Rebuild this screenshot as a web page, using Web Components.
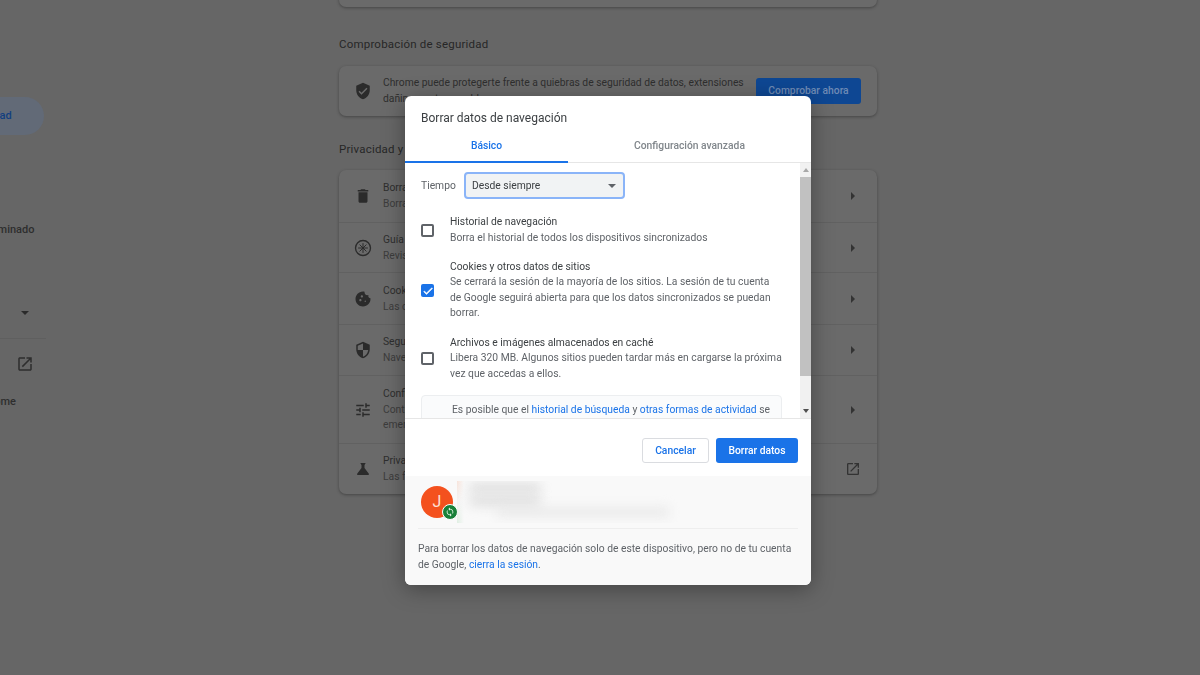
<!DOCTYPE html>
<html lang="es">
<head>
<meta charset="utf-8">
<title>Configuración</title>
<style>
  html, body { margin: 0; height: 100%; overflow: hidden; }
  body { background: #666; font-family: Roboto, "Liberation Sans", sans-serif; color: #2b2b2b; }
  settings-app { height: 675px; }
  section-title.second { margin: 25px 0 13px; }
  nav-item.last { margin-top: -1px; }
</style>
</head>
<body>
<settings-app>
  <side-nav slot="nav">
    <nav-item>Google y tú</nav-item>
    <nav-item>Autocompletar</nav-item>
    <nav-item active>Privacidad y seguridad</nav-item>
    <nav-item>Aspecto</nav-item>
    <nav-item>Buscador</nav-item>
    <nav-item>Navegador predeterminado</nav-item>
    <nav-item>Al iniciar</nav-item>
    <nav-item kind="more">Avanzada</nav-item>
    <nav-item kind="ext">Extensiones</nav-item>
    <nav-item class="last">Información de Chrome</nav-item>
  </side-nav>

  <settings-card class="stub"></settings-card>

  <section-title>Comprobación de seguridad</section-title>
  <settings-card>
    <safety-row>Chrome puede protegerte frente a quiebras de seguridad de datos, extensiones dañinas y otros problemas</safety-row>
  </settings-card>

  <section-title class="second">Privacidad y seguridad</section-title>
  <settings-card>
    <settings-row icon="trash" title="Borrar datos de navegación" h="52">Borra el historial, las cookies, la caché y mucho más</settings-row>
    <settings-row icon="guide" title="Guía de privacidad" h="50">Revisa los controles clave de privacidad y seguridad</settings-row>
    <settings-row icon="cookie" title="Cookies y otros datos de sitios" h="52">Las cookies de terceros se bloquean en modo incógnito</settings-row>
    <settings-row icon="shield" title="Seguridad" h="51">Navegación segura y otras opciones de seguridad</settings-row>
    <settings-row icon="tune" title="Configuración de sitios" h="68">Controla qué información pueden usar y mostrar los sitios (ubicación, cámara, ventanas<br>emergentes y más)</settings-row>
    <settings-row icon="flask" title="Privacy Sandbox" h="51" end="ext">Las funciones de prueba están activadas</settings-row>
  </settings-card>

  <clear-dialog slot="dialog">
    <check-row title="Historial de navegación">Borra el historial de todos los dispositivos sincronizados</check-row>
    <check-row title="Cookies y otros datos de sitios" checked>Se cerrará la sesión de la mayoría de los sitios. La sesión de tu cuenta<br>de Google seguirá abierta para que los datos sincronizados se puedan borrar.</check-row>
    <check-row title="Archivos e imágenes almacenados en caché">Libera 320 MB. Algunos sitios pueden tardar más en cargarse la próxima vez que accedas a ellos.</check-row>
  </clear-dialog>
</settings-app>

<script>
const ICONS = {
  check: '<path d="M12 1L3 5v6c0 5.55 3.84 10.74 9 12 5.16-1.26 9-6.45 9-12V5l-9-4zm-2 16l-4-4 1.41-1.41L10 14.17l6.59-6.59L18 9l-8 8z"/>',
  trash: '<path d="M6 19c0 1.1.9 2 2 2h8c1.1 0 2-.9 2-2V7H6v12zM19 4h-3.5l-1-1h-5l-1 1H5v2h14V4z"/>',
  guide: '<circle cx="12" cy="12" r="10" fill="none" stroke="currentColor" stroke-width="1.8"/><path d="M12 5.5v13M5.5 12h13M7.4 7.4l9.2 9.2M16.6 7.4l-9.2 9.2" fill="none" stroke="currentColor" stroke-width="1.3"/>',
  cookie: '<path d="M21.95 10.99c-1.79-.03-3.7-1.95-2.68-4.22-2.97 1-5.78-1.59-5.19-4.56C7.11.74 2 6.41 2 12c0 5.52 4.48 10 10 10 5.89 0 10.54-5.08 9.95-11.01zM8.5 15c-.83 0-1.5-.67-1.5-1.5S7.67 12 8.5 12s1.5.67 1.5 1.5S9.33 15 8.5 15zm2-5C9.67 10 9 9.33 9 8.5S9.67 7 10.5 7s1.5.67 1.5 1.5-.67 1.5-1.5 1.5zm4.5 6c-.55 0-1-.45-1-1s.45-1 1-1 1 .45 1 1-.45 1-1 1z"/>',
  shield: '<path d="M12 1L3 5v6c0 5.55 3.84 10.74 9 12 5.16-1.26 9-6.45 9-12V5l-9-4zm0 10.99h7c-.53 4.12-3.28 7.79-7 8.94V12H5V6.3l7-3.11v8.8z"/>',
  tune: '<path d="M3 17v2h6v-2H3zM3 5v2h10V5H3zm10 16v-2h8v-2h-8v-2h-2v6h2zM7 9v2H3v2h4v2h2V9H7zm14 4v-2H11v2h10zm-6-4h2V7h4V5h-4V3h-2v6z"/>',
  flask: '<path d="M19.8 18.4L14 10.67V6.5l1.35-1.69c.26-.33.03-.81-.39-.81H9.04c-.42 0-.65.48-.39.81L10 6.5v4.17L4.2 18.4c-.49.66-.02 1.6.8 1.6h14c.82 0 1.29-.94.8-1.6z"/>',
  ext: '<path d="M19 19H5V5h7V3H5c-1.11 0-2 .9-2 2v14c0 1.1.89 2 2 2h14c1.1 0 2-.9 2-2v-7h-2v7zM14 3v2h3.59l-9.83 9.83 1.41 1.41L19 6.41V10h2V3h-7z"/>',
  sync: '<path d="M12 4V1L8 5l4 4V6c3.31 0 6 2.69 6 6 0 1.01-.25 1.97-.7 2.8l1.46 1.46C19.54 15.03 20 13.57 20 12c0-4.42-3.58-8-8-8zm0 14c-3.31 0-6-2.69-6-6 0-1.01.25-1.97.7-2.8L5.24 7.74C4.46 8.97 4 10.43 4 12c0 4.42 3.58 8 8 8v3l4-4-4-4v3z"/>',
  tick: '<path d="M9 16.17L4.83 12l-1.41 1.41L9 19 21 7l-1.41-1.41z" stroke="currentColor" stroke-width="1"/>'
};

function svgIcon(name, size) {
  return `<svg viewBox="0 0 24 24" width="${size}" height="${size}" fill="currentColor" aria-hidden="true">${ICONS[name]}</svg>`;
}

class SettingsApp extends HTMLElement {
  constructor() {
    super();
    this.attachShadow({ mode: "open" }).innerHTML = `
      <style>
        :host { display: flex; align-items: flex-start; }
        main { width: 538px; margin: -23px 0 0 295px; display: flex; flex-direction: column; }
      </style>
      <slot name="nav"></slot>
      <main><slot></slot></main>
      <slot name="dialog"></slot>
    `;
  }
}

class SideNav extends HTMLElement {
  constructor() {
    super();
    this.attachShadow({ mode: "open" }).innerHTML = `
      <style>
        :host { display: flex; flex-direction: column; flex: none; width: 156px; margin: 21px 0 0 -112px; }
      </style>
      <slot></slot>
    `;
  }
}

class NavItem extends HTMLElement {
  constructor() {
    super();
    const kind = this.getAttribute("kind");
    const end = kind === "more"
      ? '<i class="caret"></i>'
      : kind === "ext" ? svgIcon("ext", 18) : "";
    this.attachShadow({ mode: "open" }).innerHTML = `
      <style>
        :host { display: flex; align-items: center; justify-content: space-between; box-sizing: border-box;
                height: 38px; padding: 0 10px 2px 12px; white-space: nowrap;
                font-size: 11px; font-weight: 500; color: #2e2e2e; border-radius: 0 19px 19px 0; }
        :host([active]) { background: #626a77; color: #123f80; }
        :host([kind="more"]) { margin-top: 8px; }
        :host([kind="ext"]) { margin-top: 13px; position: relative; }
        :host([kind="ext"])::before { content: ""; position: absolute; left: 0; right: -2px; top: -8px; height: 1px; background: #5f5f5f; }
        .caret { border: 4px solid transparent; border-top: 4px solid #2a2a2a; border-bottom: 0; margin-right: 5px; }
        svg { color: #2e2e2e; }
      </style>
      <span><slot></slot></span>${end}
    `;
  }
}

class SectionTitle extends HTMLElement {
  constructor() {
    super();
    this.attachShadow({ mode: "open" }).innerHTML = `
      <style>
        :host { display: block; font-size: 11.5px; font-weight: 400; line-height: 16px; color: #262626;
                letter-spacing: .2px; margin: 29px 0 14px; }
      </style>
      <slot></slot>
    `;
  }
}

class SettingsCard extends HTMLElement {
  constructor() {
    super();
    this.attachShadow({ mode: "open" }).innerHTML = `
      <style>
        :host { display: block; background: #6a6a6a; border-radius: 7px;
                box-shadow: 0 1px 3px rgba(30,30,30,.45); overflow: hidden; }
        :host(.stub) { height: 30px; }
      </style>
      <slot></slot>
    `;
  }
}

class SafetyRow extends HTMLElement {
  constructor() {
    super();
    this.attachShadow({ mode: "open" }).innerHTML = `
      <style>
        :host { display: flex; align-items: center; height: 50px; padding: 0 16px 0 15px; }
        .icon { width: 29px; flex: none; color: #2b2b2b; display: flex; }
        .text { flex: 1; font-size: 10.3px; line-height: 16px; color: #2e2e2e; }
        .btn { flex: none; margin-left: 6px; width: 105px; height: 26px; background: #0e4793; color: #6f8bb5;
               border-radius: 3px; font-size: 10.3px; font-weight: 500; line-height: 26px; text-align: center; }
      </style>
      <div class="icon">${svgIcon("check", 18)}</div>
      <div class="text"><slot></slot></div>
      <div class="btn">Comprobar ahora</div>
    `;
  }
}

class SettingsRow extends HTMLElement {
  constructor() {
    super();
    const end = this.getAttribute("end") === "ext" ? svgIcon("ext", 18) : '<i class="arrow"></i>';
    this.attachShadow({ mode: "open" }).innerHTML = `
      <style>
        :host { display: flex; align-items: center; box-sizing: border-box; height: ${this.getAttribute("h")}px;
                padding: 0 16px 0 15px; border-top: 1px solid #616161; }
        :host(:first-child) { border-top: 0; }
        .icon { width: 29px; flex: none; display: flex; color: #2b2b2b; }
        .text { flex: 1; font-size: 10.3px; line-height: 15.6px; }
        .title { color: #2e2e2e; }
        .sub { color: #3c3c3c; }
        .end { width: 16px; flex: none; display: flex; justify-content: center; color: #333; }
        .arrow { border: 4px solid transparent; border-left: 4px solid #333; border-right: 0; }
      </style>
      <div class="icon">${svgIcon(this.getAttribute("icon"), 18)}</div>
      <div class="text">
        <div class="title">${this.getAttribute("title")}</div>
        <div class="sub"><slot></slot></div>
      </div>
      <div class="end">${end}</div>
    `;
  }
}

class CheckRow extends HTMLElement {
  constructor() {
    super();
    const on = this.hasAttribute("checked");
    this.attachShadow({ mode: "open" }).innerHTML = `
      <style>
        :host { display: flex; align-items: center; margin-bottom: 13.5px; }
        .box { flex: none; box-sizing: border-box; width: 13px; height: 13px; border-radius: 2px; margin: 2px 16px 0 0;
               border: 2px solid #5f6368; display: flex; align-items: center; justify-content: center; color: #fff; }
        .box.on { background: #1a73e8; border: 0; }
        .text { font-size: 10.3px; line-height: 15.6px; color: #5f6368; flex: 1; }
        .title { color: #3c4043; }
      </style>
      <div class="box ${on ? "on" : ""}">${on ? svgIcon("tick", 12) : ""}</div>
      <div class="text">
        <div class="title">${this.getAttribute("title")}</div>
        <div><slot></slot></div>
      </div>
    `;
  }
}

class ClearDialog extends HTMLElement {
  constructor() {
    super();
    this.attachShadow({ mode: "open" }).innerHTML = `
      <style>
        :host { position: fixed; left: 405px; top: 96px; width: 406px; height: 489px; background: #fff;
                border-radius: 6px; overflow: hidden; display: flex; flex-direction: column;
                box-shadow: 0 4px 22px rgba(0,0,0,.35); color: #5f6368; font-size: 10.3px; }
        h1 { margin: 0; font-size: 12px; font-weight: 400; line-height: 16px; color: #3c4043; padding: 14px 16px 0; }
        .tabs { display: flex; height: 33px; margin-top: 4px; box-sizing: border-box; border-bottom: 1px solid #e6e6e6; }
        .tab { font-weight: 500; text-align: center; line-height: 32px; box-sizing: border-box; height: 33px; }
        .tab.on { width: 163px; color: #1a73e8; border-bottom: 2px solid #1a73e8; }
        .tab.off { flex: 1; color: #80868b; }
        .middle { display: flex; height: 255px; border-bottom: 1px solid #e6e6e6; }
        .scroll { flex: 1; overflow: hidden; padding: 9px 16px 0 16px; }
        .time { display: flex; align-items: center; margin-bottom: 15px; }
        .time label { width: 43px; flex: none; color: #5f6368; }
        .select { width: 161px; height: 27px; box-sizing: border-box; border: 2px solid #8ab4f8; border-radius: 4px;
                  background: #f1f3f4; color: #3c4043; display: flex; align-items: center; justify-content: space-between; padding: 0 6px; }
        .select i { border: 4px solid transparent; border-top: 4px solid #5f6368; border-bottom: 0; margin-right: 1px; }
        .info { margin: .5px 2px 0 0; border: 1px solid #eceef0; border-radius: 4px 4px 0 0; background: #fafbfc; height: 60px;
                padding: 6px 0 0 30px; line-height: 16px; white-space: nowrap; }
        a { color: #1a73e8; text-decoration: none; }
        .bar { width: 11px; flex: none; background: #f1f1f1; display: flex; flex-direction: column; align-items: center; }
        .bar .up { border: 3.5px solid transparent; border-bottom: 4px solid #a8a8a8; border-top: 0; margin: 5px 0 5px; }
        .bar .thumb { width: 100%; height: 199px; background: #c1c1c1; }
        .bar .down { border: 3.5px solid transparent; border-top: 4px solid #505050; border-bottom: 0; margin-top: auto; margin-bottom: 5px; }
        .actions { display: flex; justify-content: flex-end; gap: 7px; padding: 19px 13px 13px; }
        .btn { height: 25px; box-sizing: border-box; border-radius: 3px; font-weight: 500; display: flex; align-items: center; justify-content: center; }
        .btn.cancel { width: 67px; border: 1px solid #dadce0; color: #1a73e8; }
        .btn.ok { width: 82px; background: #1a73e8; color: #fff; }
        footer { flex: 1; background: #f9f9f9; padding: 0 13px; }
        .account { display: flex; align-items: center; height: 52px; padding-left: 3px; border-bottom: 1px solid #eee; }
        .avatar { position: relative; width: 32px; height: 32px; border-radius: 50%; background: #f4511e; color: #fde0d6;
                  font-size: 16px; font-weight: 400; text-align: center; line-height: 32px; flex: none; }
        .badge { position: absolute; left: 21px; top: 18px; width: 14px; height: 14px; border-radius: 50%; background: #188038;
                 border: 1px solid #fff; display: flex; align-items: center; justify-content: center; color: #e8f5e9; }
        .blur { margin-left: 4px; width: 223px; height: 42px; position: relative; overflow: hidden;
                background: linear-gradient(90deg, transparent 0, #f9f9f9 7px), linear-gradient(180deg, #f8e3da, #f3f3f3 50%, #dfefe2); }
        .blur b { position: absolute; display: block; background: #d8d8d8; filter: blur(6px); }
        .note { margin: 12px 0 0; line-height: 16px; }
      </style>
      <h1>Borrar datos de navegación</h1>
      <div class="tabs">
        <div class="tab on">Básico</div>
        <div class="tab off">Configuración avanzada</div>
      </div>
      <div class="middle">
        <div class="scroll">
          <div class="time"><label>Tiempo</label><div class="select">Desde siempre<i></i></div></div>
          <slot></slot>
          <div class="info">Es posible que el <a>historial de búsqueda</a> y <a>otras formas de actividad</a> se</div>
        </div>
        <div class="bar"><i class="up"></i><div class="thumb"></div><i class="down"></i></div>
      </div>
      <div class="actions">
        <div class="btn cancel">Cancelar</div>
        <div class="btn ok">Borrar datos</div>
      </div>
      <footer>
        <div class="account">
          <div class="avatar">J<span class="badge">${svgIcon("sync", 10)}</span></div>
          <div class="blur">
            <b style="left:13px;top:3px;width:70px;height:8px"></b>
            <b style="left:13px;top:16px;width:70px;height:8px"></b>
            <b style="left:40px;top:27px;width:172px;height:8px;background:#e6e6e6"></b>
          </div>
        </div>
        <p class="note">Para borrar los datos de navegación solo de este dispositivo, pero no de tu cuenta de Google, <a>cierra la sesión</a>.</p>
      </footer>
    `;
  }
}

customElements.define("settings-app", SettingsApp);
customElements.define("side-nav", SideNav);
customElements.define("nav-item", NavItem);
customElements.define("section-title", SectionTitle);
customElements.define("settings-card", SettingsCard);
customElements.define("safety-row", SafetyRow);
customElements.define("settings-row", SettingsRow);
customElements.define("check-row", CheckRow);
customElements.define("clear-dialog", ClearDialog);
</script>
</body>
</html>
